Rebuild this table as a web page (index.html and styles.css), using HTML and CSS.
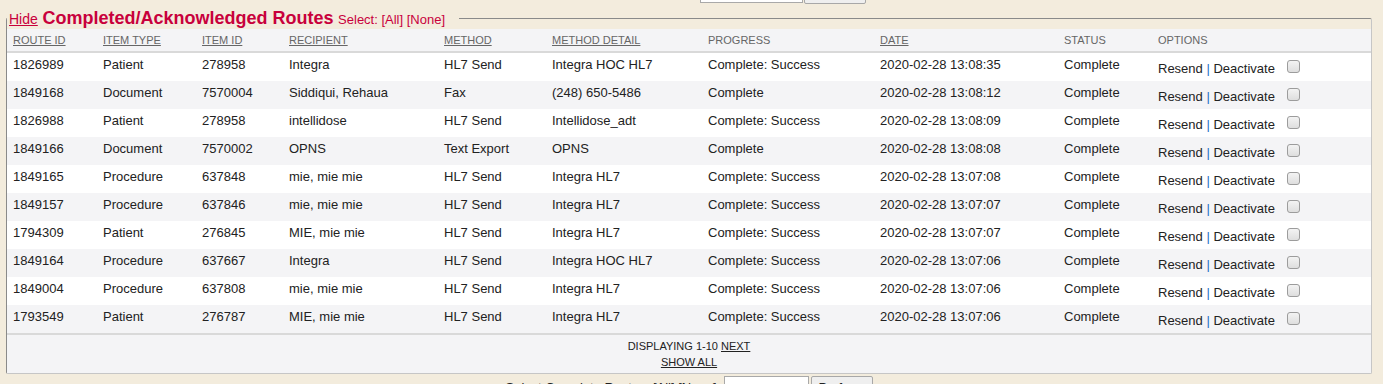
FILE: index.html
```html
<!DOCTYPE html>
<html>
<head>
<meta charset="utf-8">
<link rel="stylesheet" href="styles.css">
</head>
<body>
<div class="page">
  <div class="formrow top">
    <span class="label">Select New Routes: <a class="sel">[All]</a> <a class="sel">[None]</a></span>
    <input class="txt wide" type="text"><button class="btn">Perform</button>
  </div>
  <fieldset class="box">
    <legend class="legend"><a class="hide">Hide</a> <span class="title">Completed/Acknowledged Routes</span> <span class="select">Select: <a>[All]</a> <a>[None]</a></span></legend>
    <table class="grid">
      <colgroup>
        <col style="width:91px"><col style="width:99px"><col style="width:87px"><col style="width:155px"><col style="width:108px"><col style="width:156px"><col style="width:172px"><col style="width:184px"><col style="width:94px"><col>
      </colgroup>
      <thead>
        <tr>
          <th><a class="sort">ROUTE ID</a></th>
          <th><a class="sort">ITEM TYPE</a></th>
          <th><a class="sort">ITEM ID</a></th>
          <th><a class="sort">RECIPIENT</a></th>
          <th><a class="sort">METHOD</a></th>
          <th><a class="sort">METHOD DETAIL</a></th>
          <th>PROGRESS</th>
          <th><a class="sort">DATE</a></th>
          <th>STATUS</th>
          <th>OPTIONS</th>
        </tr>
      </thead>
      <tbody>
        <tr><td>1826989</td><td>Patient</td><td>278958</td><td>Integra</td><td>HL7 Send</td><td>Integra HOC HL7</td><td>Complete: Success</td><td>2020-02-28 13:08:35</td><td>Complete</td><td class="opts"><a>Resend</a> <span class="sep">|</span> <a>Deactivate</a><input class="chk" type="checkbox"></td></tr>
        <tr><td>1849168</td><td>Document</td><td>7570004</td><td>Siddiqui, Rehaua</td><td>Fax</td><td>(248) 650-5486</td><td>Complete</td><td>2020-02-28 13:08:12</td><td>Complete</td><td class="opts"><a>Resend</a> <span class="sep">|</span> <a>Deactivate</a><input class="chk" type="checkbox"></td></tr>
        <tr><td>1826988</td><td>Patient</td><td>278958</td><td>intellidose</td><td>HL7 Send</td><td>Intellidose_adt</td><td>Complete: Success</td><td>2020-02-28 13:08:09</td><td>Complete</td><td class="opts"><a>Resend</a> <span class="sep">|</span> <a>Deactivate</a><input class="chk" type="checkbox"></td></tr>
        <tr><td>1849166</td><td>Document</td><td>7570002</td><td>OPNS</td><td>Text Export</td><td>OPNS</td><td>Complete</td><td>2020-02-28 13:08:08</td><td>Complete</td><td class="opts"><a>Resend</a> <span class="sep">|</span> <a>Deactivate</a><input class="chk" type="checkbox"></td></tr>
        <tr><td>1849165</td><td>Procedure</td><td>637848</td><td>mie, mie mie</td><td>HL7 Send</td><td>Integra HL7</td><td>Complete: Success</td><td>2020-02-28 13:07:08</td><td>Complete</td><td class="opts"><a>Resend</a> <span class="sep">|</span> <a>Deactivate</a><input class="chk" type="checkbox"></td></tr>
        <tr><td>1849157</td><td>Procedure</td><td>637846</td><td>mie, mie mie</td><td>HL7 Send</td><td>Integra HL7</td><td>Complete: Success</td><td>2020-02-28 13:07:07</td><td>Complete</td><td class="opts"><a>Resend</a> <span class="sep">|</span> <a>Deactivate</a><input class="chk" type="checkbox"></td></tr>
        <tr><td>1794309</td><td>Patient</td><td>276845</td><td>MIE, mie mie</td><td>HL7 Send</td><td>Integra HL7</td><td>Complete: Success</td><td>2020-02-28 13:07:07</td><td>Complete</td><td class="opts"><a>Resend</a> <span class="sep">|</span> <a>Deactivate</a><input class="chk" type="checkbox"></td></tr>
        <tr><td>1849164</td><td>Procedure</td><td>637667</td><td>Integra</td><td>HL7 Send</td><td>Integra HOC HL7</td><td>Complete: Success</td><td>2020-02-28 13:07:06</td><td>Complete</td><td class="opts"><a>Resend</a> <span class="sep">|</span> <a>Deactivate</a><input class="chk" type="checkbox"></td></tr>
        <tr><td>1849004</td><td>Procedure</td><td>637808</td><td>mie, mie mie</td><td>HL7 Send</td><td>Integra HL7</td><td>Complete: Success</td><td>2020-02-28 13:07:06</td><td>Complete</td><td class="opts"><a>Resend</a> <span class="sep">|</span> <a>Deactivate</a><input class="chk" type="checkbox"></td></tr>
        <tr><td>1793549</td><td>Patient</td><td>276787</td><td>MIE, mie mie</td><td>HL7 Send</td><td>Integra HL7</td><td>Complete: Success</td><td>2020-02-28 13:07:06</td><td>Complete</td><td class="opts"><a>Resend</a> <span class="sep">|</span> <a>Deactivate</a><input class="chk" type="checkbox"></td></tr>
      </tbody>
      <tfoot>
        <tr>
          <td colspan="10" class="foot">
            <div>DISPLAYING 1-10 <a class="ulink">NEXT</a></div>
            <div><a class="ulink">SHOW ALL</a></div>
          </td>
        </tr>
      </tfoot>
    </table>
  </fieldset>
  <div class="formrow bottom">
    <span class="label">Select Complete Routes: <a class="sel">[All]</a> <a class="sel">[None]</a></span>
    <input class="txt" type="text"><button class="btn">Perform</button>
  </div>
</div>
</body>
</html>
```
FILE: styles.css
```css
html, body {
  margin: 0;
  padding: 0;
  background: #f3ecdd;
  overflow: hidden;
}
body {
  font-family: "Liberation Sans", Arial, sans-serif;
  font-size: 13px;
  color: #222;
}
.page {
  padding: 0 11px 0 6px;
}
.formrow {
  display: flex;
  justify-content: center;
  align-items: center;
  height: 24px;
  font-size: 13px;
  color: #222;
}
.formrow.top {
  margin-top: -20px;
}
.formrow.bottom {
  margin-top: 1px;
}
.formrow .label {
  margin-right: 7px;
}
.txt {
  box-sizing: border-box;
  width: 85px;
  height: 22px;
  border: 1px solid #a9a9a9;
  background: #fff;
  margin: 0 2px 0 0;
  padding: 0 2px;
}
.txt.wide {
  width: 103px;
  margin-right: 1px;
}
.btn {
  box-sizing: border-box;
  width: 62px;
  height: 23px;
  border: 1px solid #a8a8a8;
  border-radius: 2px;
  background: #efefef;
  font-family: "Liberation Sans", Arial, sans-serif;
  font-size: 13px;
  color: #222;
  padding: 0;
}
.box {
  margin: 4px 0 0 0;
  padding: 0;
  border-style: solid;
  border-width: 1px;
  border-color: #8a8a8a #c6c6c6 #c6c6c6 #8a8a8a;
  border-radius: 2px;
  min-width: 0;
}
.legend {
  box-sizing: border-box;
  height: 21px;
  line-height: 21px;
  padding: 0 14px 0 2px;
  margin-left: 0;
  white-space: nowrap;
  color: #c8003c;
}
.legend > * {
  line-height: 21px;
  vertical-align: baseline;
}
.hide {
  font-size: 14px;
  color: #c8003c;
  text-decoration: underline;
  margin-right: 1px;
}
.title {
  font-size: 18px;
  font-weight: bold;
}
.select {
  font-size: 13px;
  margin-left: 1px;
}
.grid {
  width: 100%;
  border-collapse: separate;
  border-spacing: 0;
  table-layout: fixed;
}
.grid th {
  padding: 4px 0 4px 5px;
  line-height: 14px;
  text-align: left;
  vertical-align: middle;
  font-weight: normal;
  font-size: 11px;
  color: #666;
  background: #f4f4f6;
  border-bottom: 2px solid #d9d9d9;
  white-space: nowrap;
}
.grid th:first-child {
  padding-left: 6px;
}
.sort {
  text-decoration: underline;
  color: #666;
}
.grid tbody td {
  padding: 4px 0 9px 5px;
  line-height: 15px;
  vertical-align: top;
  white-space: nowrap;
  color: #222;
}
.grid tbody td:first-child {
  padding-left: 6px;
}
.grid tbody tr:nth-child(even) td {
  background: #f4f4f6;
}
.grid tbody tr:nth-child(odd) td {
  background: #fff;
}
.grid tbody td.opts {
  padding-top: 7px;
  padding-bottom: 5px;
}
.sep {
  color: #1a6fc4;
}
.chk {
  -webkit-appearance: none;
  appearance: none;
  box-sizing: border-box;
  width: 13px;
  height: 13px;
  margin: 0 0 0 12px;
  vertical-align: baseline;
  border: 1px solid #9c9c9c;
  border-radius: 3px;
  background: linear-gradient(#f3f3f3, #dedede);
}
.foot {
  background: #f4f4f6;
  text-align: center;
  font-size: 11px;
  line-height: 16px;
  padding: 3px 0 3px 0;
  color: #222;
  border-top: 2px solid #d9d9d9;
}
.ulink {
  text-decoration: underline;
  color: #222;
}
```
